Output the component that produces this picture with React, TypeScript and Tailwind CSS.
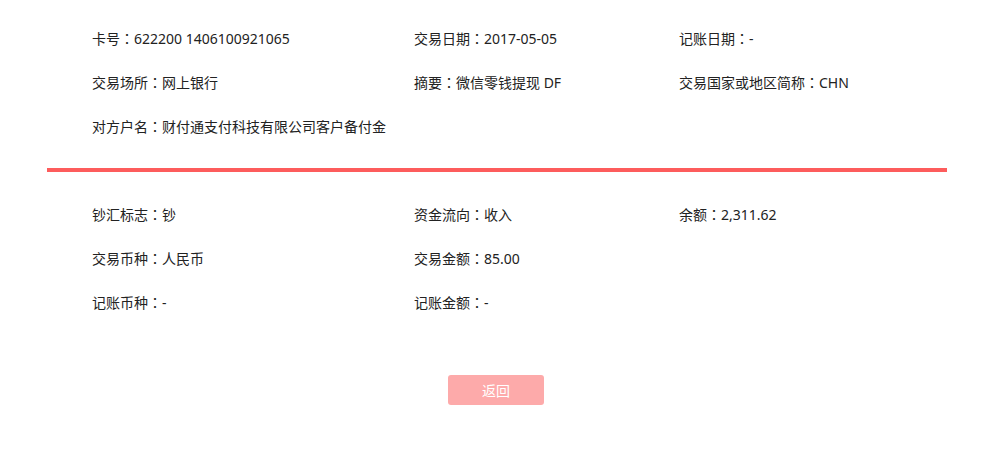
import React from "react";

const top = [
  ["卡号：622200 1406100921065", "交易日期：2017-05-05", "记账日期：-"],
  ["交易场所：网上银行", "摘要：微信零钱提现 DF", "交易国家或地区简称：CHN"],
  ["对方户名：财付通支付科技有限公司客户备付金", "", ""],
];

const bottom = [
  ["钞汇标志：钞", "资金流向：收入", "余额：2,311.62"],
  ["交易币种：人民币", "交易金额：85.00", ""],
  ["记账币种：-", "记账金额：-", ""],
];

// label：value, colon drawn centered like the original
const Field = ({ text }: { text: string }) => {
  if (!text) return <span />;
  const [label, value] = text.split("：");
  return (
    <span className="whitespace-nowrap">
      {label}
      <span style={{ fontFamily: '"Noto Sans CJK TC", sans-serif' }}>：</span>
      {value}
    </span>
  );
};

const Rows = ({ rows }: { rows: string[][] }) => (
  <div className="pl-[45px]">
    {rows.map((r, i) => (
      <div key={i} className="grid grid-cols-[322px_265px_1fr] h-[44px] items-center">
        {r.map((c, j) => (
          <Field key={j} text={c} />
        ))}
      </div>
    ))}
  </div>
);

export default function App() {
  return (
    <div
      className="w-[983px] h-[464px] bg-white text-[14px] text-[#222]"
      style={{ fontFamily: '"Segoe UI", "Noto Sans", "Noto Sans CJK SC", sans-serif' }}
    >
      <div className="ml-[47px] w-[900px] pt-[16px]">
        <Rows rows={top} />
        <div className="mt-[20px] h-[4px] bg-[#fd5c5c]" />
        <div className="pt-[20px]">
          <Rows rows={bottom} />
        </div>
        <div className="flex justify-center mt-[51px]">
          <button className="ml-[-2px] w-[96px] h-[30px] rounded-[3px] bg-[#fdaaaa] text-white text-[14px]">
            返回
          </button>
        </div>
      </div>
    </div>
  );
}
